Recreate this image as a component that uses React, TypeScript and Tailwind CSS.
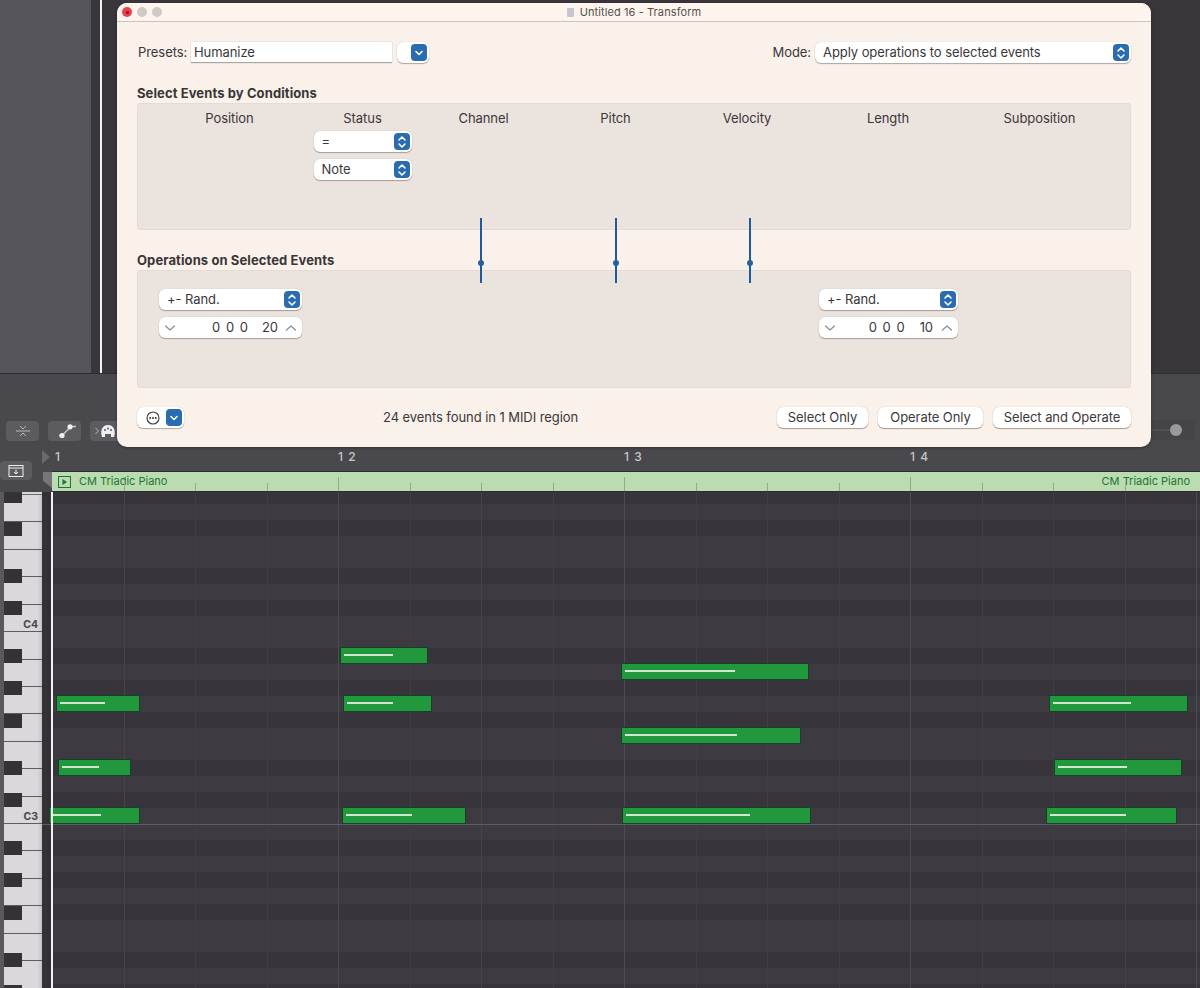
import React from "react";

const FONT = "font-['Inter','Liberation_Sans',sans-serif]";

function Blue({ kind }: { kind: "updown" | "down" }) {
  return (
    <span className="flex h-[17px] w-[16px] shrink-0 items-center justify-center rounded-[4px] bg-[#2a6cb0]">
      {kind === "updown" ? (
        <svg width="10" height="14" viewBox="0 0 10 14" fill="none" stroke="#ffffff" strokeWidth="1.6" strokeLinecap="round" strokeLinejoin="round">
          <path d="M2 5 L5 2 L8 5" />
          <path d="M2 9 L5 12 L8 9" />
        </svg>
      ) : (
        <svg width="10" height="8" viewBox="0 0 10 8" fill="none" stroke="#ffffff" strokeWidth="1.6" strokeLinecap="round" strokeLinejoin="round">
          <path d="M2 2.5 L5 5.5 L8 2.5" />
        </svg>
      )}
    </span>
  );
}

function Popup({ label, width }: { label: string; width: string }) {
  return (
    <div className={`flex h-[21px] items-center justify-between rounded-[6px] bg-white pl-[8px] pr-[2px] shadow-[0_1px_1px_rgba(70,60,55,0.4),0_0_1px_rgba(70,60,55,0.25)] ${width}`}>
      <span className="text-[13px] leading-none text-[#3b3739]">{label}</span>
      <Blue kind="updown" />
    </div>
  );
}

function Stepper({ left, right, width, gap, rightGap }: { left: string; right: string; width: string; gap: string; rightGap: string }) {
  return (
    <div className={`flex h-[21px] items-center justify-between rounded-[6px] bg-white px-[5px] shadow-[0_1px_1px_rgba(70,60,55,0.4),0_0_1px_rgba(70,60,55,0.25)] ${width}`}>
      <svg width="12" height="8" viewBox="0 0 12 8" fill="none" stroke="#8f8b8b" strokeWidth="1.2" strokeLinecap="round" strokeLinejoin="round">
        <path d="M1.5 2 L6 6 L10.5 2" />
      </svg>
      <span className={`ml-auto flex items-center text-[13px] leading-none text-[#3b3739] ${gap}`}>
        <span className="tracking-[1px]">{left}</span>
        <span>{right}</span>
      </span>
      <svg className={rightGap} width="12" height="8" viewBox="0 0 12 8" fill="none" stroke="#8f8b8b" strokeWidth="1.2" strokeLinecap="round" strokeLinejoin="round">
        <path d="M1.5 6 L6 2 L10.5 6" />
      </svg>
    </div>
  );
}

function PushButton({ label, width }: { label: string; width: string }) {
  return (
    <button className={`flex h-[21px] items-center justify-center rounded-[6px] bg-white text-[13px] leading-none text-[#3b3739] shadow-[0_1px_1px_rgba(70,60,55,0.45),0_0_1px_rgba(70,60,55,0.3)] ${width}`}>
      {label}
    </button>
  );
}

function Slider({ x }: { x: string }) {
  return (
    <div className={`absolute top-[215px] h-[65px] w-[2px] bg-[#1f5a99] ${x}`}>
      <span className="absolute left-[-2px] top-[42px] h-[6px] w-[6px] rounded-full bg-[#25619f]" />
    </div>
  );
}

function TransformWindow() {
  const cols = ["Position", "Status", "Channel", "Pitch", "Velocity", "Length", "Subposition"];
  return (
    <div className="absolute left-[117px] top-[3px] h-[444px] w-[1034px] rounded-[10px] bg-[#f9f1ea] tracking-[-0.07px] shadow-[0_1px_3px_rgba(0,0,0,0.35)]">
      <div className="relative flex h-[19px] items-center justify-center rounded-t-[10px] border-b border-[#c9c3bd] bg-[#fdf5ed]">
        <div className="absolute left-[5px] top-[4px] flex gap-[5px]">
          <span className="flex h-[10px] w-[10px] items-center justify-center rounded-full bg-[#e8434a]">
            <span className="h-[3px] w-[3px] rounded-full bg-[#7d1416]" />
          </span>
          <span className="h-[10px] w-[10px] rounded-full bg-[#cfcac4]" />
          <span className="h-[10px] w-[10px] rounded-full bg-[#cfcac4]" />
        </div>
        <span className="flex items-center gap-[6px] text-[11px] leading-none tracking-[0.1px] text-[#55504f]">
          <span className="h-[9px] w-[7px] rounded-[1px] bg-[#c6c7cc]" />
          Untitled 16 - Transform
        </span>
      </div>

      <div className="flex flex-col px-[20px] pt-[20px]">
        <div className="flex h-[21px] items-center pl-px">
          <span className="w-[53px] text-[13px] leading-none text-[#3b3739]">Presets:</span>
          <div className="flex h-[21px] w-[201px] items-center border-b border-[#aaa5a1] bg-white pl-[3px] text-[13px] leading-none text-[#3b3739] shadow-[0_0_1px_rgba(70,60,55,0.4)]">
            Humanize
          </div>
          <div className="ml-[5px] flex h-[21px] w-[32px] items-center justify-end rounded-[6px] bg-white pr-[2px] shadow-[0_1px_1px_rgba(70,60,55,0.4),0_0_1px_rgba(70,60,55,0.25)]">
            <Blue kind="down" />
          </div>
          <span className="ml-auto mr-[4px] text-[13px] leading-none text-[#3b3739]">Mode:</span>
          <Popup label="Apply operations to selected events" width="w-[316px]" />
        </div>

        <h2 className="mt-[22px] mb-[2px] h-[16px] text-[13px] font-bold leading-[16px] tracking-[0.1px] text-[#3a3638]">Select Events by Conditions</h2>
        <div className="h-[127px] rounded-[3px] border border-[#e3dbd5] bg-[#ebe3de] pl-[25px] pt-[6px]">
          <div className="grid grid-cols-[133px_133px_109px_155px_108px_174px_129px]">
            {cols.map((c) => (
              <div key={c} className="flex flex-col items-center">
                <span className="h-[16px] text-[13px] leading-[16px] text-[#3b3739]">{c}</span>
                {c === "Status" && (
                  <div className="mt-[5px] flex flex-col gap-[7px]">
                    <Popup label="=" width="w-[98px]" />
                    <Popup label="Note" width="w-[98px]" />
                  </div>
                )}
              </div>
            ))}
          </div>
        </div>

        <h2 className="mt-[22px] mb-[2px] h-[16px] text-[13px] font-bold leading-[16px] tracking-[0.1px] text-[#3a3638]">Operations on Selected Events</h2>
        <div className="flex h-[118px] rounded-[3px] border border-[#e3dbd5] bg-[#ebe3de] pl-[21px] pt-[18px]">
          <div className="flex w-[143px] flex-col gap-[7px]">
            <Popup label="+- Rand." width="w-[143px]" />
            <Stepper left="0 0 0" right="20" width="w-[143px]" gap="gap-[13px]" rightGap="ml-[7px]" />
          </div>
          <div className="ml-[517px] flex w-[139px] flex-col gap-[7px]">
            <Popup label="+- Rand." width="w-[139px]" />
            <Stepper left="0 0 0" right="10" width="w-[139px]" gap="gap-[14px]" rightGap="ml-[8px]" />
          </div>
        </div>

        <div className="relative mt-[19px] flex h-[21px] items-center">
          <div className="flex h-[21px] w-[47px] items-center justify-between rounded-[6px] bg-white pl-[9px] pr-[2px] shadow-[0_1px_1px_rgba(70,60,55,0.4),0_0_1px_rgba(70,60,55,0.25)]">
            <svg width="14" height="14" viewBox="0 0 14 14" fill="none">
              <circle cx="7" cy="7" r="6" stroke="#3b3739" strokeWidth="1.1" />
              <circle cx="4.2" cy="7" r="1" fill="#3b3739" />
              <circle cx="7" cy="7" r="1" fill="#3b3739" />
              <circle cx="9.8" cy="7" r="1" fill="#3b3739" />
            </svg>
            <Blue kind="down" />
          </div>
          <span className="ml-[199px] text-[13px] leading-none text-[#3b3739]">24 events found in 1 MIDI region</span>
          <div className="ml-auto flex gap-[10px]">
            <PushButton label="Select Only" width="w-[91px]" />
            <PushButton label="Operate Only" width="w-[105px]" />
            <PushButton label="Select and Operate" width="w-[138px]" />
          </div>
        </div>
      </div>

      <Slider x="left-[363px]" />
      <Slider x="left-[498px]" />
      <Slider x="left-[632px]" />
    </div>
  );
}

function ToolButton({ children, width = "w-[33px]" }: { children: React.ReactNode; width?: string }) {
  return <div className={`flex h-[20px] items-center justify-center rounded-[4px] bg-[#5c5b5f] ${width}`}>{children}</div>;
}

function Toolbar() {
  return (
    <div className="relative flex h-[75px] items-start gap-[9px] border-t border-[#2d2c30] bg-[#49484c] pl-[6px] pt-[47px]">
      <ToolButton>
        <svg width="16" height="16" viewBox="0 0 16 16" fill="none" stroke="#b9b8ba" strokeWidth="1">
          <path d="M1 8 H15" />
          <path d="M5 3 L8 6 L11 3" />
          <path d="M5 13 L8 10 L11 13" />
        </svg>
      </ToolButton>
      <ToolButton>
        <svg width="24" height="16" viewBox="0 0 24 16" fill="none">
          <path d="M6 12.5 H9 L18 3.5 H23" stroke="#c9c8ca" strokeWidth="1.3" />
          <circle cx="9" cy="12.5" r="2.6" fill="#efeeef" />
          <circle cx="17" cy="3.8" r="2.6" fill="#efeeef" />
        </svg>
      </ToolButton>
      <ToolButton width="w-[40px] justify-start pl-[5px]">
        <svg width="24" height="16" viewBox="0 0 24 16" fill="none">
          <path d="M0.5 5 L3.5 8 L0.5 11" stroke="#b9b8ba" strokeWidth="1" />
          <path d="M7 14 C5 8 7 2 13 2 C19 2 21 8 19 14 H16 V11 H10 V14 Z" fill="#efeeef" />
          <circle cx="10" cy="7" r="1" fill="#5c5b5f" />
          <circle cx="13" cy="5.5" r="1" fill="#5c5b5f" />
          <circle cx="16" cy="7" r="1" fill="#5c5b5f" />
        </svg>
      </ToolButton>
      <div className="absolute left-[1149px] top-[46px] flex h-[20px] w-[46px] items-center justify-end rounded-[4px] bg-[#454448] pr-[13px]">
        <span className="absolute left-0 right-[14px] top-[9px] h-[2px] bg-[#504f53]" />
        <span className="relative h-[12px] w-[12px] rounded-full bg-[#99989b]" />
      </div>
    </div>
  );
}

const gridXs = Array.from({ length: 17 }, (_, k) => 52 + 71.5 * k);
const strongGrid = [4, 8, 12, 16];
const midGrid = [1, 6, 15];

function Header() {
  const bars = ["1 2", "1 3", "1 4"];
  return (
    <div className="flex h-[44px] bg-[#49484c]">
      <div className="relative flex w-[52px] shrink-0 flex-col">
        <div className="ml-0 mt-[13px] flex h-[19px] w-[32px] items-center justify-center rounded-[4px] bg-[#5c5b5f]">
          <svg width="16" height="14" viewBox="0 0 16 14" fill="none" stroke="#efeeef" strokeWidth="1">
            <rect x="1" y="1.5" width="14" height="11" />
            <path d="M1 4 H15" />
            <path d="M8 5.5 V10 M6 8 L8 10 L10 8" />
          </svg>
        </div>
        <span className="absolute left-[42px] top-[2px] h-0 w-0 border-y-[7px] border-l-[8px] border-y-transparent border-l-[#6a696d]" />
        <span className="absolute left-[43px] top-[24px] h-[16px] w-[9px] bg-[#77767a] [clip-path:polygon(0_0,100%_0,100%_100%,0_55%)]" />
      </div>
      <div className="flex min-w-0 flex-1 flex-col">
        <div className="flex h-[24px] items-start whitespace-nowrap border-b border-[#2d2c30] pt-[3px] text-[12px] font-medium leading-[12px] tracking-[1px] text-[#c7c6c8]">
          <span className="ml-[3px] w-[3px]">1</span>
          {bars.map((b, i) => (
            <span key={b} className={`w-[17px] ${i === 0 ? "ml-[280px]" : "ml-[269px]"}`}>{b}</span>
          ))}
        </div>
        <div className="relative flex h-[20px] items-center justify-between border-b border-[#2d2c30] bg-[#bbdcb0] pl-[6px] pr-[10px] text-[11px] leading-none text-[#1c7434]">
          <span className="flex items-center gap-[8px]">
            <svg width="13" height="12" viewBox="0 0 13 12" fill="none">
              <rect x="0.5" y="0.5" width="12" height="11" stroke="#1c7434" />
              <path d="M4.5 3 L9 6 L4.5 9 Z" fill="#1c7434" />
            </svg>
            CM Triadic Piano
          </span>
          <span>CM Triadic Piano</span>
          {gridXs.slice(1, 16).map((x, k) => (
            <span
              key={x}
              className={`absolute bottom-0 w-px bg-[#8fae87] ${(k + 1) % 4 === 0 ? "h-[14px]" : "h-[8px]"}`}
              style={{ left: x - 52 }}
            />
          ))}
        </div>
      </div>
    </div>
  );
}

const blackTops = [489, 522, 569, 601, 649, 681, 714, 761, 793, 841, 873, 906, 953, 985];

function Piano() {
  const whites = Array.from({ length: 19 });
  return (
    <div className="relative flex w-[42px] shrink-0 bg-[#5a595d] pl-[4px]">
      <div className="flex flex-1 flex-col overflow-hidden">
        <div className="h-[3px] shrink-0 border-b border-[#6c6b6f] bg-[#d8d6d9]" />
        {whites.map((_, i) => (
          <div
            key={i}
            className="relative flex h-[27.43px] shrink-0 items-center justify-end border-b border-[#5c5b5f] bg-gradient-to-r from-[#dad8db] from-[88%] to-[#c4c2c6] pr-[4px] pt-[14px] text-[10.5px] font-bold leading-none text-[#48474b]"
          >
            {i === 4 ? "C4" : i === 11 ? "C3" : ""}
          </div>
        ))}
      </div>
      {blackTops.map((t) => (
        <span key={t} className="absolute left-[4px] h-[14px] w-[18px] bg-[#343237]" style={{ top: t - 492 }} />
      ))}
    </div>
  );
}

const DARK = new Set([1, 3, 6, 8, 10]);
const rows = Array.from({ length: 32 }, (_, i) => {
  const semitone = 8 - i;
  const n = ((semitone % 12) + 12) % 12;
  return { n, h: i === 0 ? 12 : 16 };
});

const notes = [
  { l: 56, r: 140, y: 696, e: 105 },
  { l: 58, r: 130.5, y: 760, e: 99 },
  { l: 49, r: 139.5, y: 808, e: 101 },
  { l: 340, r: 427.5, y: 648, e: 393 },
  { l: 343, r: 431.5, y: 696, e: 393 },
  { l: 342, r: 465.5, y: 808, e: 412 },
  { l: 620.5, r: 808.5, y: 664, e: 735 },
  { l: 620.5, r: 801, y: 728, e: 737 },
  { l: 621.5, r: 811, y: 808, e: 750 },
  { l: 1049, r: 1187.5, y: 696, e: 1131 },
  { l: 1054, r: 1181.5, y: 760, e: 1127 },
  { l: 1046, r: 1176.5, y: 808, e: 1126 },
];

function Roll() {
  return (
    <div className="relative flex min-h-0 flex-1 overflow-hidden">
      <Piano />
      <div className="w-[9px] shrink-0 bg-[#333136]" />
      <div className="flex min-w-0 flex-1 flex-col">
        {rows.map((r, i) => (
          <div
            key={i}
            className={`shrink-0 ${DARK.has(r.n) ? "bg-[#37353b]" : "bg-[#3d3b41]"}`}
            style={{ height: r.h }}
          />
        ))}
      </div>
      {gridXs.slice(1).map((x, k) => {
        const idx = k + 1;
        const cls = strongGrid.includes(idx) ? "bg-[#4c4b51]" : midGrid.includes(idx) ? "bg-[#45444a]" : "bg-[#403f44]";
        return <span key={x} className={`absolute bottom-0 top-0 w-px ${cls}`} style={{ left: x }} />;
      })}
      <span className="absolute left-[42px] right-0 top-[332px] h-px bg-[#5d5c60]" />
      {notes.map((n) => (
        <div
          key={`${n.l}-${n.y}`}
          className="absolute h-[17px] border border-[#16402a] bg-[#21983c]"
          style={{ left: n.l, top: n.y - 493, width: n.r - n.l }}
        >
          <span className="absolute top-[6px] h-[2px] bg-[#cfe8cd]" style={{ left: 3, width: n.e - n.l - 4 }} />
        </div>
      ))}
      <span className="absolute bottom-0 left-[51px] top-0 w-[2px] bg-[#f2f2f2]" />
    </div>
  );
}

export default function App() {
  return (
    <div className={`relative flex h-[988px] w-[1200px] flex-col overflow-hidden bg-[#38363b] ${FONT}`}>
      <div className="flex h-[373px] shrink-0 bg-[#38363b]">
        <div className="w-[91px] bg-[#55545a]" />
        <div className="ml-[9px] w-[2px] bg-[#f2f2f2]" />
      </div>
      <Toolbar />
      <Header />
      <Roll />
      <TransformWindow />
    </div>
  );
}
